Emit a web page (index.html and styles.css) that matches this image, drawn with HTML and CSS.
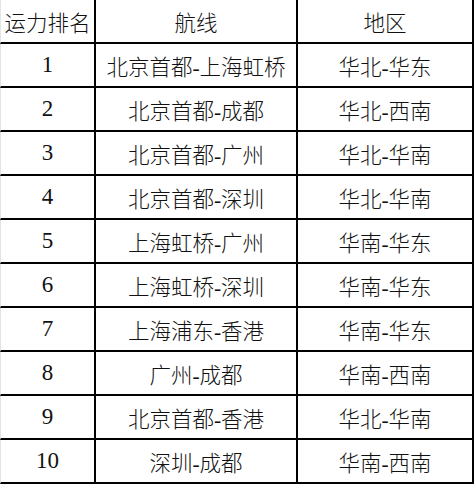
FILE: index.html
```
<!DOCTYPE html>
<html>
<head>
<meta charset="utf-8">
<link rel="stylesheet" href="styles.css">
</head>
<body>
<table class="rank">
<thead>
<tr><th class="c1">运力排名</th><th class="c2">航线</th><th class="c3">地区</th></tr>
</thead>
<tbody>
<tr><td class="num">1</td><td>北京首都-上海虹桥</td><td>华北-华东</td></tr>
<tr><td class="num">2</td><td>北京首都-成都</td><td>华北-西南</td></tr>
<tr><td class="num">3</td><td>北京首都-广州</td><td>华北-华南</td></tr>
<tr><td class="num">4</td><td>北京首都-深圳</td><td>华北-华南</td></tr>
<tr><td class="num">5</td><td>上海虹桥-广州</td><td>华南-华东</td></tr>
<tr><td class="num">6</td><td>上海虹桥-深圳</td><td>华南-华东</td></tr>
<tr><td class="num">7</td><td>上海浦东-香港</td><td>华南-华东</td></tr>
<tr><td class="num">8</td><td>广州-成都</td><td>华南-西南</td></tr>
<tr><td class="num">9</td><td>北京首都-香港</td><td>华北-华南</td></tr>
<tr><td class="num">10</td><td>深圳-成都</td><td>华南-西南</td></tr>
</tbody>
</table>
</body>
</html>
```
FILE: styles.css
```
html, body {
  margin: 0;
  padding: 0;
  background: #fff;
}
.rank {
  border-collapse: separate;
  border-spacing: 0;
  table-layout: fixed;
  width: 473px;
  font-family: "Liberation Serif", "Noto Sans CJK SC", serif;
  font-size: 21.5px;
  font-weight: 300;
  color: #111;
}
.rank th, .rank td {
  padding: 0;
  text-align: center;
  vertical-align: middle;
  border-right: 2px solid #000;
  border-bottom: 2px solid #000;
  font-weight: 300;
  height: 42px;
  white-space: nowrap;
}
.rank th {
  height: 42px;
}
.rank .c1 { width: 93px; border-left: 1px solid #e4e4e4; }
.rank td:first-child { border-left: 1px solid #e4e4e4; }
.rank .c2 { width: 200px; }
.rank .c3 { width: 174px; }
.rank .num {
  font-size: 23px;
}
```
